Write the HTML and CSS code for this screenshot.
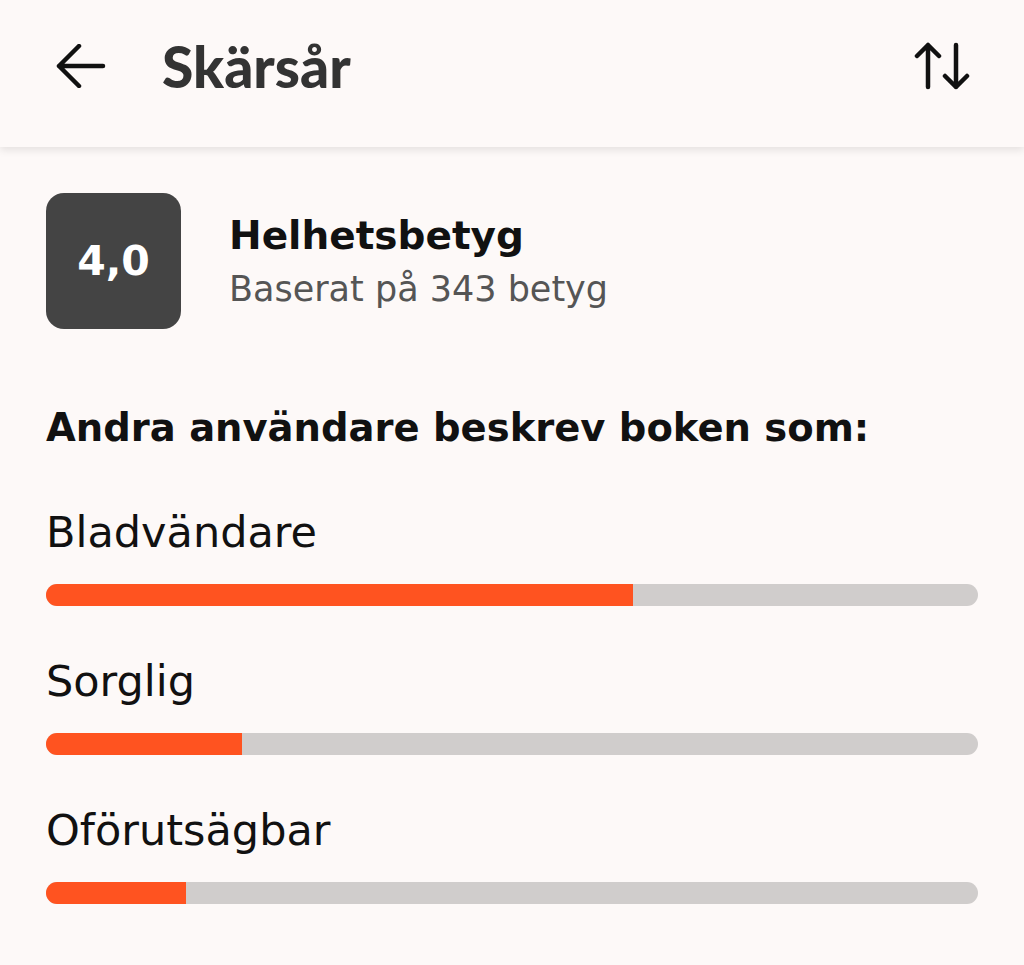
FILE: index.html
```html
<!DOCTYPE html>
<html lang="sv">
<head>
  <meta charset="UTF-8" />
  <meta name="viewport" content="width=device-width, initial-scale=1.0"/>
  <title>Skärsår – betyg</title>
  <link rel="stylesheet" href="styles.css">
</head>
<body>

  <header class="topbar">
    <svg class="back" width="52" height="44" viewBox="0 0 52 44" aria-label="Tillbaka">
      <path d="M4 22H48M24 2L4 22L24 42" fill="none" stroke="#111" stroke-width="4.5" stroke-linecap="round" stroke-linejoin="round"/>
    </svg>
    <h1>Skärsår</h1>
    <svg class="sort" width="56" height="50" viewBox="0 0 56 50" aria-label="Sortera">
      <path d="M14 46V4M3 15L14 4L25 15" fill="none" stroke="#111" stroke-width="4.5" stroke-linecap="round" stroke-linejoin="round"/>
      <path d="M42 4V46M31 35L42 46L53 35" fill="none" stroke="#111" stroke-width="4.5" stroke-linecap="round" stroke-linejoin="round"/>
    </svg>
  </header>

  <main class="content">
    <div class="overall">
      <div class="score">4,0</div>
      <div class="overall-text">
        <h2>Helhetsbetyg</h2>
        <p>Baserat på 343 betyg</p>
      </div>
    </div>

    <h3>Andra användare beskrev boken som:</h3>

    <div class="tags">
      <div class="tag">
        <span class="tag-name">Bladvändare</span>
        <div class="track"><div class="fill" style="width: 63%"></div></div>
      </div>
      <div class="tag">
        <span class="tag-name">Sorglig</span>
        <div class="track"><div class="fill" style="width: 21%"></div></div>
      </div>
      <div class="tag">
        <span class="tag-name">Oförutsägbar</span>
        <div class="track"><div class="fill" style="width: 15%"></div></div>
      </div>
    </div>
  </main>

</body>
</html>
```

FILE: styles.css
```css
* {
  box-sizing: border-box;
}

body {
  font-family: "DejaVu Sans", "Noto Sans", sans-serif;
  background: #fdf9f8;
  color: #111;
  margin: 0;
  padding: 0;
}

.topbar {
  height: 147px;
  display: flex;
  align-items: center;
  padding: 0 54px 16px 55px;
  background: #fdf9f8;
  box-shadow: 0 3px 8px rgba(0, 0, 0, 0.1);
  position: relative;
}

.topbar h1 {
  margin: 0 0 0 55px;
  font-family: Lato, sans-serif;
  font-size: 57px;
  font-weight: 900;
  color: #333;
  flex: 1;
}

.content {
  padding: 46px 46px 0;
}

.overall {
  display: flex;
  align-items: center;
  gap: 48px;
}

.score {
  width: 135px;
  height: 136px;
  border-radius: 18px;
  background: #444;
  color: #fff;
  font-size: 41px;
  font-weight: 700;
  display: flex;
  align-items: center;
  justify-content: center;
}

.overall-text h2 {
  margin: 0;
  font-size: 39px;
  line-height: 46px;
  font-weight: 700;
}

.overall-text p {
  margin: 10px 0 0;
  font-size: 35px;
  line-height: 40px;
  color: #555;
}

h3 {
  margin: 75px 0 0;
  font-size: 38.5px;
  line-height: 48px;
  font-weight: 700;
}

.tags {
  margin-top: 55px;
  display: flex;
  flex-direction: column;
  gap: 50px;
}

.tag-name {
  display: block;
  font-size: 43px;
  line-height: 50px;
}

.track {
  margin-top: 27px;
  height: 22px;
  border-radius: 11px;
  background: #d0cdcc;
  overflow: hidden;
}

.fill {
  height: 100%;
  background: #ff5320;
}
```
